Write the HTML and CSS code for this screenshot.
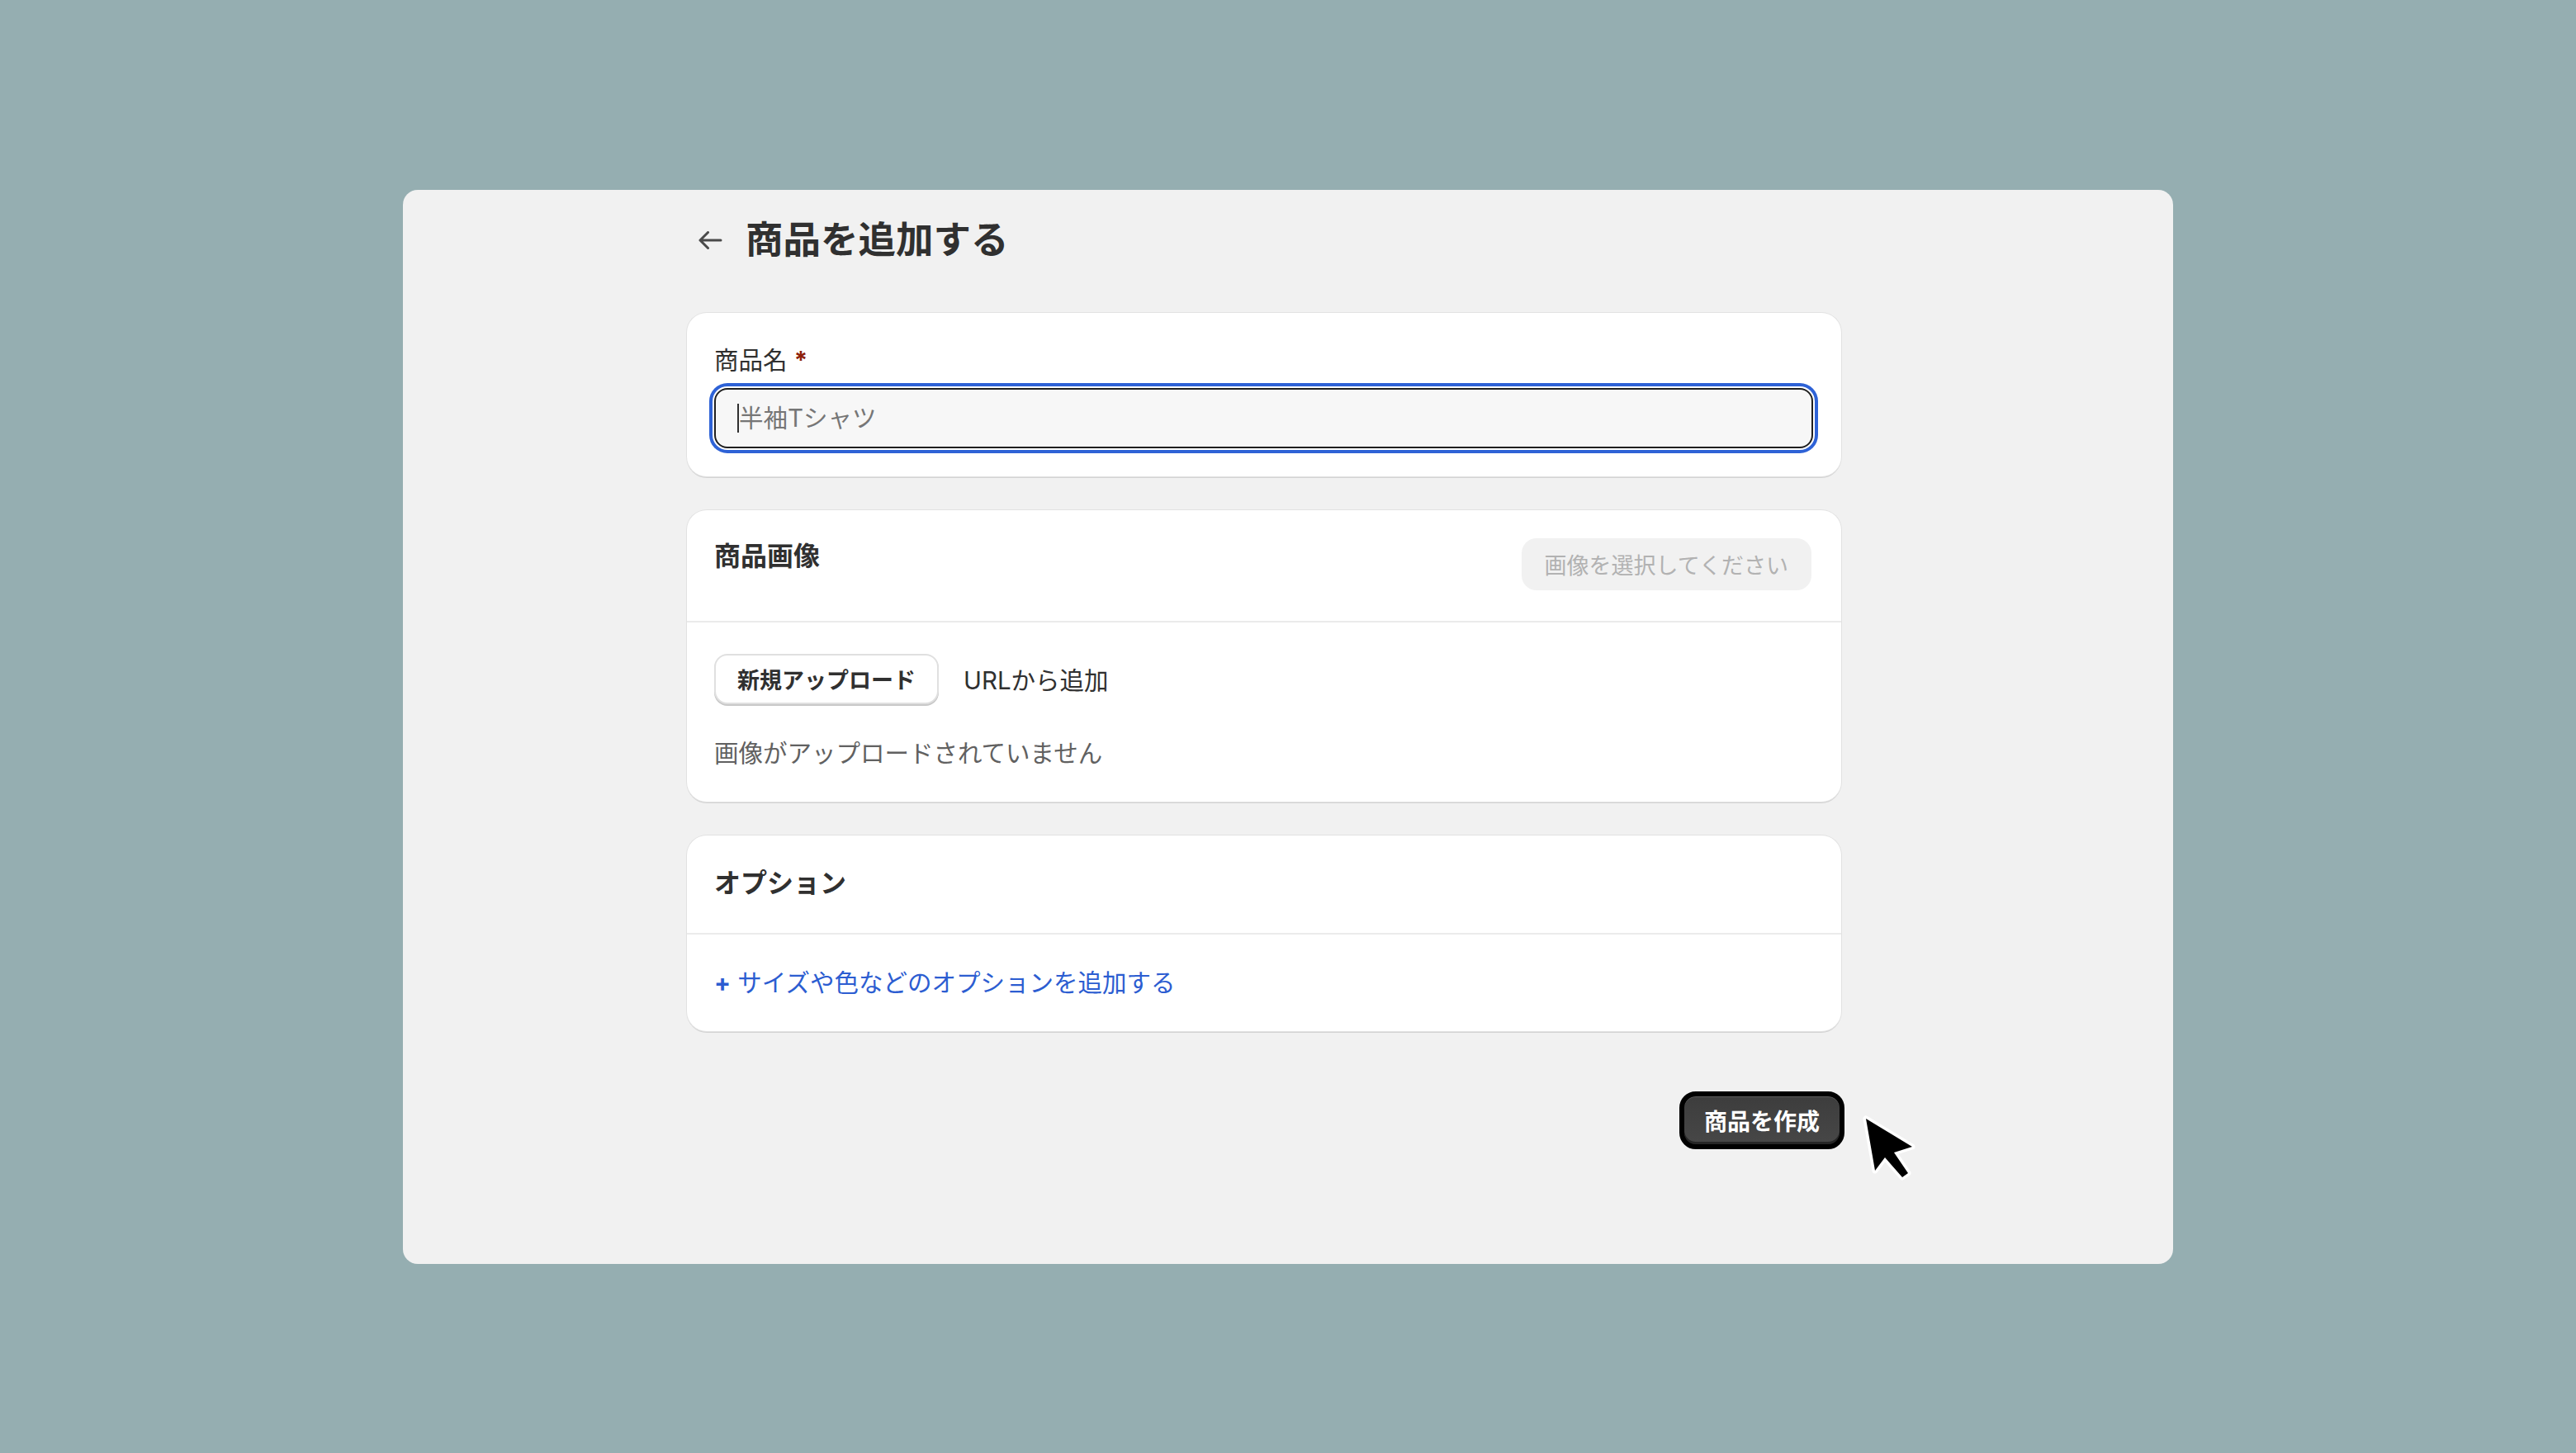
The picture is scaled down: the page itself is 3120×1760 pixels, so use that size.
FILE: index.html
```html
<!DOCTYPE html>
<html lang="ja">
<head>
    <meta charset="UTF-8">
    <meta name="viewport" content="width=device-width, initial-scale=1.0">
    <title>商品を追加する</title>
    <link rel="stylesheet" href="styles.css">
</head>
<body>
    <div class="panel">
        <div class="page">
            <div class="page-title">
                <button class="back-button">
                    <svg width="30" height="22" viewBox="0 0 30 22">
                        <path d="M3 11 H28 M12.5 1.5 L3 11 L12.5 20.5" fill="none" stroke="#4a4a4a" stroke-width="3" stroke-linecap="round" stroke-linejoin="round"/>
                    </svg>
                </button>
                <h1>商品を追加する</h1>
            </div>

            <div class="card name-card">
                <label class="field-label" for="product-name">商品名 <span class="required">*</span></label>
                <div class="field">
                    <input id="product-name" type="text" placeholder="半袖Tシャツ">
                </div>
            </div>

            <div class="card">
                <div class="card-header">
                    <h2>商品画像</h2>
                    <button class="select-button">画像を選択してください</button>
                </div>
                <div class="card-body">
                    <div class="upload-row">
                        <button class="upload-button">新規アップロード</button>
                        <button class="plain-button">URLから追加</button>
                    </div>
                    <p class="empty-text">画像がアップロードされていません</p>
                </div>
            </div>

            <div class="card option-card">
                <div class="card-header">
                    <h2>オプション</h2>
                </div>
                <div class="card-body">
                    <a class="add-link" href="#"><span class="plus">+</span> サイズや色などのオプションを追加する</a>
                </div>
            </div>

            <div class="page-footer">
                <div class="submit-wrap">
                    <button class="submit-button">商品を作成</button>
                    <svg class="pointer" width="75" height="95" viewBox="0 0 75 95">
                        <polygon points="9,10 20,73 32,57 53,81 60,76 43,51 65,44" fill="#000" stroke="#fff" stroke-width="7" stroke-linejoin="round" paint-order="stroke"/>
                    </svg>
                </div>
            </div>
        </div>
    </div>
</body>
</html>
```

FILE: styles.css
```css
* {
    margin: 0;
    padding: 0;
    box-sizing: border-box;
}
body {
    height: 100vh;
    display: flex;
    justify-content: center;
    align-items: center;
    background: #95aeb1;
    font-family: "Inter", "Noto Sans CJK JP", sans-serif;
    color: #303030;
}
button {
    font-family: inherit;
    border: none;
    outline: none;
    background: none;
    cursor: pointer;
}

.panel {
    width: 2144px;
    height: 1301px;
    padding: 31px 0 0 344px;
    border-radius: 18px;
    background: #f1f1f1;
}
.page {
    width: 1398px;
    display: flex;
    flex-direction: column;
}
.page-title {
    height: 60px;
    padding-left: 13px;
    display: flex;
    align-items: center;
    gap: 28px;
}
.back-button {
    width: 30px;
    height: 22px;
    display: flex;
}
.page-title h1 {
    font-size: 45.5px;
    font-weight: 700;
    line-height: 60px;
    color: #303030;
}

.card {
    margin-top: 41px;
    border-radius: 24px;
    background: #fff;
    box-shadow: 0 0 0 1px #e2e2e2, 0 2px 0 0 #d3d3d3;
}
.name-card {
    margin-top: 58px;
    padding: 37px 34px 34px 33px;
}
.field-label {
    display: block;
    margin-bottom: 14px;
    font-size: 29.5px;
    line-height: 40px;
}
.required {
    color: #8e1f0b;
    font-weight: 700;
}
.field {
    position: relative;
}
.field::before {
    position: absolute;
    content: '';
    left: 28px;
    top: 19px;
    width: 2px;
    height: 35px;
    background: #303030;
}
.field input {
    width: 100%;
    height: 73px;
    padding: 0 28px;
    border: 2px solid #1f1f1f;
    border-radius: 16px;
    outline: none;
    background: #f7f7f7;
    font-family: inherit;
    font-size: 29.5px;
    color: #303030;
    box-shadow: 0 0 0 2px #fff, 0 0 0 6px #2e62d6;
}
.field input::placeholder {
    color: #767676;
}

.card-header {
    padding: 34px 36px 37px 33px;
    display: flex;
    justify-content: space-between;
    align-items: flex-start;
    border-bottom: 2px solid #ebebeb;
}
.card-header h2 {
    margin-top: 2px;
    font-size: 32px;
    font-weight: 700;
    line-height: 40px;
}
.select-button {
    height: 63px;
    padding: 0 28px;
    border-radius: 18px;
    background: #f1f1f1;
    color: #b2b2b2;
    font-size: 27px;
}
.card-body {
    padding: 38px 33px 39px;
}
.upload-row {
    display: flex;
    align-items: center;
    gap: 30px;
}
.upload-button {
    height: 61px;
    padding: 0 26px;
    border: 2px solid #e0e0e0;
    border-radius: 16px;
    background: #fff;
    box-shadow: 0 2px 0 0 #c8c8c8;
    font-size: 27px;
    font-weight: 700;
    color: #303030;
}
.plain-button {
    font-size: 29.5px;
    color: #303030;
}
.empty-text {
    margin-top: 39px;
    font-size: 29.5px;
    line-height: 40px;
    color: #616161;
}

.option-card .card-header {
    padding: 36px 33px 40px;
}
.add-link {
    display: block;
    font-size: 29.5px;
    line-height: 40px;
    color: #2c5dd1;
    text-decoration: none;
}
.add-link .plus {
    font-weight: 700;
}

.page-footer {
    margin-top: 73px;
    margin-right: -4px;
    display: flex;
    justify-content: flex-end;
}
.submit-wrap {
    position: relative;
}
.submit-button {
    height: 70px;
    padding: 0 24px;
    border: 6px solid #000;
    border-radius: 20px;
    background: linear-gradient(#3d3d3d, #474747);
    box-shadow: inset 0 1px 0 #5a5a5a, inset 0 -3px 0 #262626;
    color: #fff;
    font-size: 28px;
    font-weight: 700;
}
.pointer {
    position: absolute;
    left: calc(100% + 17px);
    top: 23px;
}
```
